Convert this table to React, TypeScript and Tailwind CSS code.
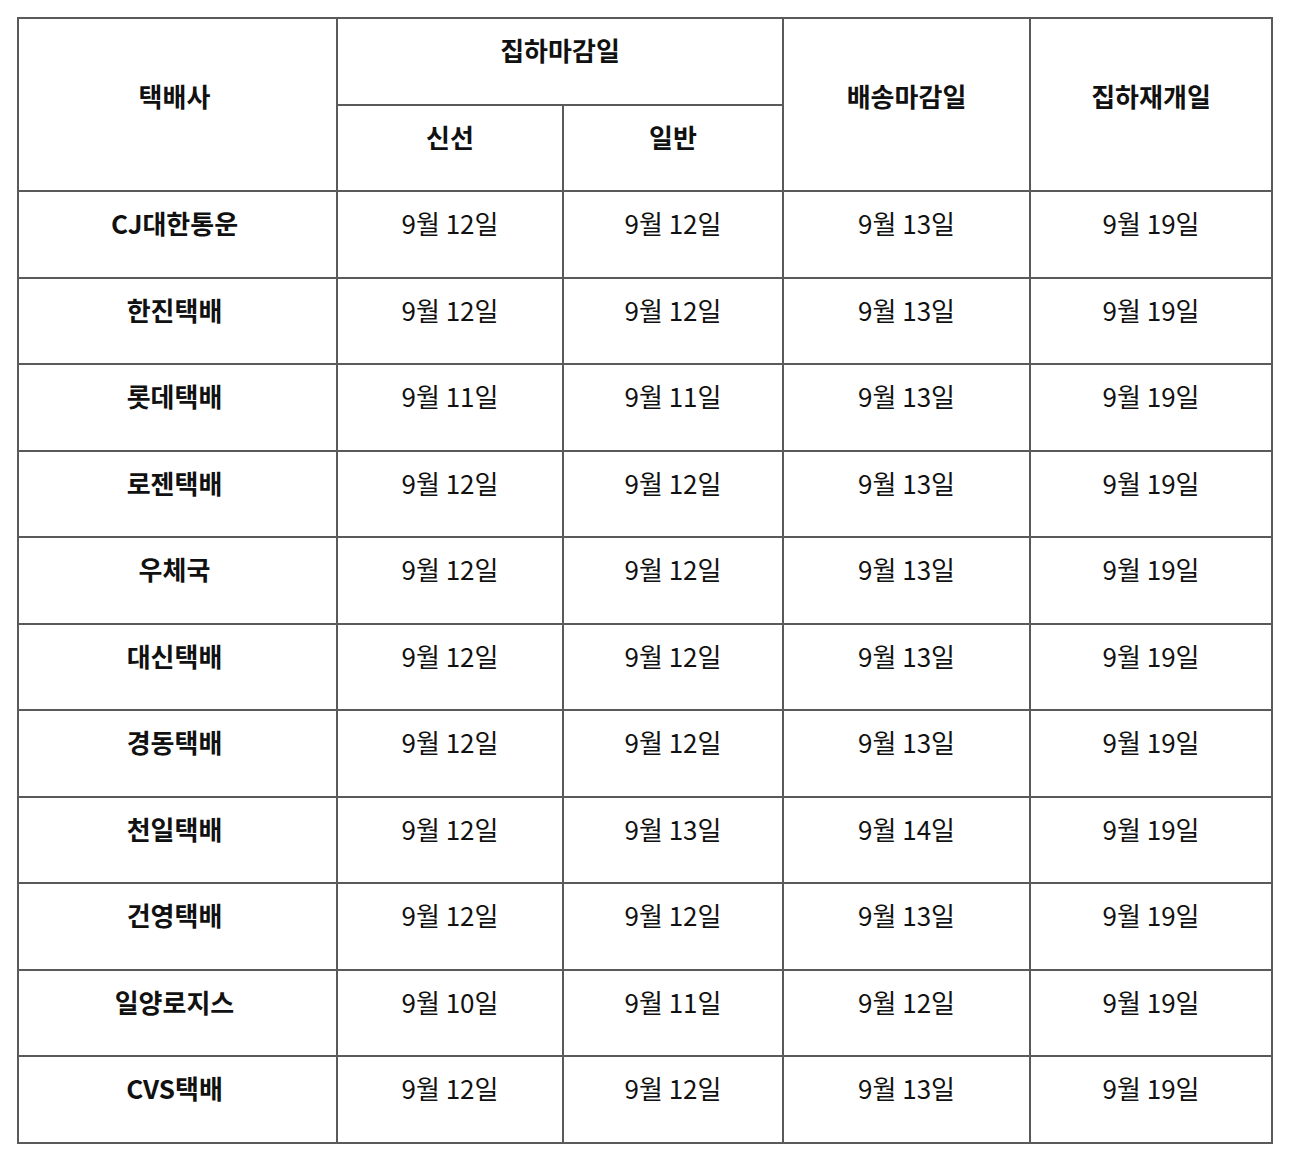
import React from "react";

const rows: [string, string, string, string, string][] = [
  ["CJ대한통운", "9월 12일", "9월 12일", "9월 13일", "9월 19일"],
  ["한진택배", "9월 12일", "9월 12일", "9월 13일", "9월 19일"],
  ["롯데택배", "9월 11일", "9월 11일", "9월 13일", "9월 19일"],
  ["로젠택배", "9월 12일", "9월 12일", "9월 13일", "9월 19일"],
  ["우체국", "9월 12일", "9월 12일", "9월 13일", "9월 19일"],
  ["대신택배", "9월 12일", "9월 12일", "9월 13일", "9월 19일"],
  ["경동택배", "9월 12일", "9월 12일", "9월 13일", "9월 19일"],
  ["천일택배", "9월 12일", "9월 13일", "9월 14일", "9월 19일"],
  ["건영택배", "9월 12일", "9월 12일", "9월 13일", "9월 19일"],
  ["일양로지스", "9월 10일", "9월 11일", "9월 12일", "9월 19일"],
  ["CVS택배", "9월 12일", "9월 12일", "9월 13일", "9월 19일"],
];

const cell =
  "border-2 border-[#5a5a5a] align-top text-center pt-[13px] px-2 leading-[36px]";
const first =
  "border-2 border-[#5a5a5a] align-top text-center pt-[13px] pl-[8px] pr-[14px] leading-[36px] font-bold";
const tall =
  "border-2 border-[#5a5a5a] align-top text-center pt-[59px] leading-[36px] font-bold";

export default function App() {
  return (
    <div
      className="bg-white min-h-[1162px] pt-[17px] pl-[17px] text-[26px] text-[#111]"
      style={{ fontFamily: '"Noto Sans CJK KR", "Noto Sans", sans-serif' }}
    >
      <table className="border-collapse w-[1254px] table-fixed">
        <colgroup>
          <col className="w-[319px]" />
          <col className="w-[226px]" />
          <col className="w-[220px]" />
          <col className="w-[247px]" />
          <col className="w-[242px]" />
        </colgroup>
        <thead>
          <tr className="h-[87px]">
            <th rowSpan={2} className={`${tall} pl-[8px] pr-[14px]`}>
              택배사
            </th>
            <th colSpan={2} className={`${cell} font-bold`}>
              집하마감일
            </th>
            <th rowSpan={2} className={tall}>
              배송마감일
            </th>
            <th rowSpan={2} className={tall}>
              집하재개일
            </th>
          </tr>
          <tr className="h-[86px]">
            <th className={`${cell} font-bold`}>신선</th>
            <th className={`${cell} font-bold`}>일반</th>
          </tr>
        </thead>
        <tbody>
          {rows.map((r, i) => (
            <tr key={r[0]} className={i % 2 === 0 ? "h-[87px]" : "h-[86px]"}>
              <td className={first}>{r[0]}</td>
              <td className={`${cell} font-normal`}>{r[1]}</td>
              <td className={`${cell} font-normal`}>{r[2]}</td>
              <td className={`${cell} font-normal`}>{r[3]}</td>
              <td className={`${cell} font-normal`}>{r[4]}</td>
            </tr>
          ))}
        </tbody>
      </table>
    </div>
  );
}
